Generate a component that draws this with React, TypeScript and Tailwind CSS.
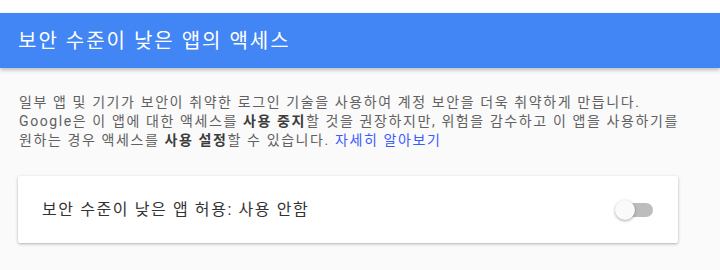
import React from 'react';

export default function App() {
  const [enabled, setEnabled] = React.useState(false);

  return (
    <div
      className="w-[720px] h-[270px] bg-[#fafafa] overflow-hidden"
      style={{ fontFamily: "Roboto, 'Noto Sans CJK KR', sans-serif" }}
    >
      <div className="h-[13px] bg-white" />

      {/* Header bar */}
      <header className="h-[55px] bg-[#4285f4] flex items-center px-[18px] shadow-[0_2px_4px_rgba(0,0,0,0.25)] relative z-10">
        <h1 className="text-[20px] tracking-[2px] text-white font-normal leading-none">보안 수준이 낮은 앱의 액세스</h1>
      </header>

      <div className="px-[18px] pt-[25px]">
        {/* Description */}
        <p className="text-[14px] tracking-[1.6px] leading-[19px] text-[#616161] pl-px whitespace-nowrap">
          일부 앱 및 기기가 보안이 취약한 로그인 기술을 사용하여 계정 보안을 더욱 취약하게 만듭니다.
          <br />
          Google은 이 앱에 대한 액세스를 <b className="font-semibold text-[#3c3c3c]">사용 중지</b>할 것을 권장하지만, 위험을 감수하고 이 앱을 사용하기를
          <br />
          원하는 경우 액세스를 <b className="font-semibold text-[#3c3c3c]">사용 설정</b>할 수 있습니다.{' '}
          <a href="#" className="text-[#3b5bfb]">자세히 알아보기</a>
        </p>

        {/* Setting card */}
        <div className="mt-[26px] w-[660px] h-[67px] bg-white rounded-[2px] shadow-[0_1px_3px_rgba(0,0,0,0.3)] flex items-center justify-between pl-[24px] pr-[25px]">
          <span className="text-[16px] tracking-[1.6px] text-[#333]">보안 수준이 낮은 앱 허용: 사용 안함</span>
          <button
            onClick={() => setEnabled(!enabled)}
            className="relative w-[38px] h-[20px] flex items-center"
          >
            <span className="absolute left-[3px] w-[35px] h-[14px] rounded-full bg-[#bdbdbd]" />
            <span
              className={
                enabled
                  ? 'absolute left-[18px] w-[20px] h-[20px] rounded-full bg-[#4285f4] shadow-[0_1px_3px_rgba(0,0,0,0.35)]'
                  : 'absolute left-0 w-[20px] h-[20px] rounded-full bg-[#fafafa] shadow-[0_1px_3px_rgba(0,0,0,0.35)]'
              }
            />
          </button>
        </div>
      </div>
    </div>
  );
}
